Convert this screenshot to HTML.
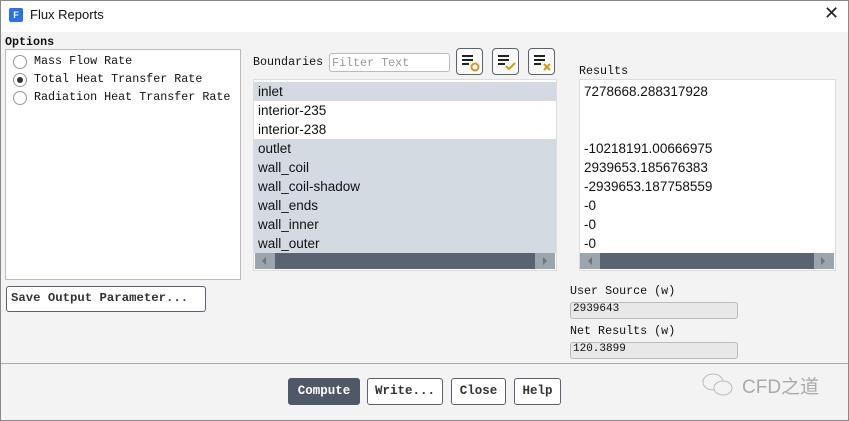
<html><head><style>
body{margin:0;width:849px;height:421px;background:#f3f3f3;position:relative;overflow:hidden;font-family:"Liberation Sans",sans-serif}
.a{position:absolute}
.mono{font-family:"Liberation Mono",monospace;font-size:11.7px;color:#111}
.row{height:19px;line-height:19px;padding-left:4px;font-size:13.5px;color:#111}
.sel{background:#d3dae2}
.ib{position:absolute;width:25px;height:25px;border:1px solid #5a6270;border-radius:4px;background:#fafafa;top:48px}
.btn{position:absolute;top:378px;height:25px;border:1px solid #5a6270;border-radius:3px;background:#fff;font-family:"Liberation Mono",monospace;font-weight:bold;font-size:12.5px;line-height:25px;text-align:center;color:#333}
.radio{position:absolute;left:13px;width:12px;height:12px;border:1px solid #999;border-radius:50%;background:#fff}
.sb{position:absolute;height:16px;background:#5b6272}
.arr{position:absolute;top:257px;width:0;height:0;border-top:4px solid transparent;border-bottom:4px solid transparent}
</style></head><body>
<div class="a" style="left:0;top:0;width:847px;height:419px;border:1px solid #888"></div>
<div class="a" style="left:1px;top:1px;width:847px;height:31px;background:#fff"></div>
<div class="a" style="left:9px;top:8px;width:14px;height:14px;background:#2a73e0;border-radius:2px;color:#fff;font-size:9px;font-weight:bold;text-align:center;line-height:14px">F</div>
<div class="a" style="left:30px;top:7px;font-size:13px;color:#111">Flux Reports</div>
<div class="a" style="left:824px;top:3px;font-size:18px;color:#222">✕</div>
<div class="a mono" style="left:5px;top:35px;font-weight:bold">Options</div>
<div class="a" style="left:5px;top:49px;width:234px;height:229px;border:1px solid #bbb;background:#fff"></div>
<div class="radio" style="top:55px"></div>
<div class="radio" style="top:73px"><div style="position:absolute;left:3px;top:3px;width:6px;height:6px;border-radius:50%;background:#333"></div></div>
<div class="radio" style="top:91px"></div>
<div class="a mono" style="left:34px;top:54px">Mass Flow Rate</div>
<div class="a mono" style="left:34px;top:72px">Total Heat Transfer Rate</div>
<div class="a mono" style="left:34px;top:90px">Radiation Heat Transfer Rate</div>
<div class="a mono" style="left:253px;top:55px">Boundaries</div>
<div class="a" style="left:329px;top:53px;width:119px;height:17px;border:1px solid #bbb;border-radius:3px;background:#fff"></div>
<div class="a mono" style="left:332px;top:56px;color:#999">Filter Text</div>
<div class="ib" style="left:456px"><svg width="25" height="25"><path d="M5 7h11M5 11h11M5 15h7" stroke="#222" stroke-width="2"/><circle cx="18" cy="18" r="3.5" fill="none" stroke="#d49a18" stroke-width="2"/></svg></div>
<div class="ib" style="left:492px"><svg width="25" height="25"><path d="M5 7h11M5 11h11M5 15h7" stroke="#222" stroke-width="2"/><path d="M13 17l3 3 6-6" fill="none" stroke="#d49a18" stroke-width="2"/></svg></div>
<div class="ib" style="left:528px"><svg width="25" height="25"><path d="M5 7h11M5 11h11M5 15h7" stroke="#222" stroke-width="2"/><path d="M15 15l6 6M21 15l-6 6" stroke="#d49a18" stroke-width="2"/></svg></div>
<div class="a" style="left:253px;top:79px;width:302px;height:190px;border:1px solid #ddd;background:#fff">
<div class="row sel" style="margin-top:2px">inlet</div><div class="row">interior-235</div><div class="row">interior-238</div>
<div class="row sel">outlet</div><div class="row sel">wall_coil</div><div class="row sel">wall_coil-shadow</div><div class="row sel">wall_ends</div><div class="row sel">wall_inner</div><div class="row sel">wall_outer</div>
</div>
<div class="a" style="left:255px;top:253px;width:300px;height:16px;background:#9aa5ae"></div>
<div class="sb" style="left:275px;top:253px;width:260px"></div>
<div class="arr" style="left:262px;border-right:4px solid #6b7580"></div>
<div class="arr" style="left:543px;border-left:4px solid #6b7580"></div>
<div class="a mono" style="left:579px;top:64px">Results</div>
<div class="a" style="left:579px;top:79px;width:255px;height:190px;border:1px solid #ddd;background:#fff">
<div class="row" style="margin-top:2px">7278668.288317928</div><div class="row"></div><div class="row"></div>
<div class="row">-10218191.00666975</div><div class="row">2939653.185676383</div><div class="row">-2939653.187758559</div><div class="row">-0</div><div class="row">-0</div><div class="row">-0</div>
</div>
<div class="a" style="left:580px;top:253px;width:254px;height:16px;background:#9aa5ae"></div>
<div class="sb" style="left:600px;top:253px;width:214px"></div>
<div class="arr" style="left:588px;border-right:4px solid #6b7580"></div>
<div class="arr" style="left:821px;border-left:4px solid #6b7580"></div>
<div class="a" style="left:6px;top:286px;width:198px;height:24px;border:1px solid #5a6270;border-radius:3px;background:#fff"></div>
<div class="a mono" style="left:11px;top:291px;font-weight:bold;color:#333;font-size:12.3px">Save Output Parameter...</div>
<div class="a mono" style="left:570px;top:284px">User Source (w)</div>
<div class="a" style="left:570px;top:302px;width:166px;height:15px;border:1px solid #bbb;border-radius:3px;background:#e8e8e8"></div>
<div class="a mono" style="left:573px;top:303px;font-size:11px">2939643</div>
<div class="a mono" style="left:570px;top:324px">Net Results (w)</div>
<div class="a" style="left:570px;top:342px;width:166px;height:15px;border:1px solid #bbb;border-radius:3px;background:#e8e8e8"></div>
<div class="a mono" style="left:573px;top:343px;font-size:11px">120.3899</div>
<div class="a" style="left:1px;top:363px;width:847px;height:1px;background:#aaa"></div>
<div class="btn" style="left:288px;width:70px;background:#4f5868;color:#fff;border-color:#4f5868">Compute</div>
<div class="btn" style="left:367px;width:74px">Write...</div>
<div class="btn" style="left:451px;width:53px">Close</div>
<div class="btn" style="left:514px;width:45px">Help</div>
<svg class="a" style="left:700px;top:371px" width="36" height="28"><ellipse cx="13" cy="11" rx="10" ry="8" fill="none" stroke="#bbb"/><ellipse cx="23" cy="17" rx="9" ry="7" fill="#f3f3f3" stroke="#bbb"/></svg>
<div class="a" style="left:742px;top:372px;font-size:19px;color:#aaa;font-family:'Liberation Sans','Noto Sans CJK SC',sans-serif">CFD之道</div>
</body></html>
